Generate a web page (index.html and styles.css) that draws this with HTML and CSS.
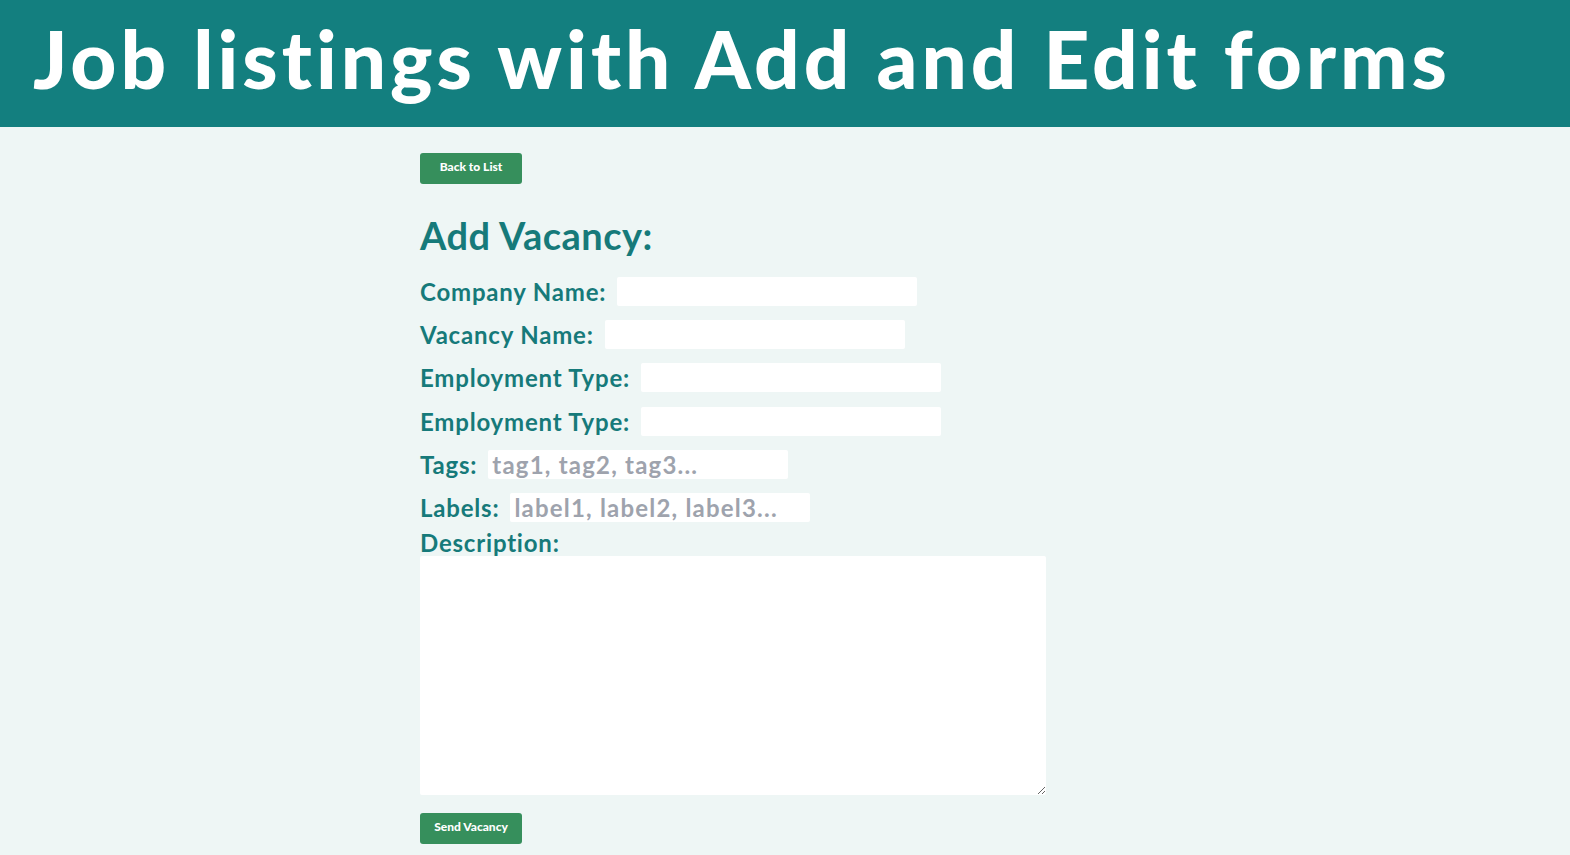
FILE: index.html
```html
<!DOCTYPE html>
<html lang="en">
<head>
<meta charset="utf-8">
<title>Job listings</title>
<link rel="stylesheet" href="styles.css">
</head>
<body>
<header class="site-header">
  <h1 class="site-title">Job listings with Add and Edit forms</h1>
</header>
<main class="container">
  <button class="btn btn-back" type="button">Back to List</button>
  <h2 class="form-title">Add Vacancy:</h2>
  <form class="vacancy-form">
    <div class="row"><label class="label">Company Name:</label><input class="field" type="text"></div>
    <div class="row"><label class="label">Vacancy Name:</label><input class="field" type="text"></div>
    <div class="row"><label class="label">Employment Type:</label><input class="field" type="text"></div>
    <div class="row"><label class="label">Employment Type:</label><input class="field" type="text"></div>
    <div class="row"><label class="label">Tags:</label><input class="field" type="text" placeholder="tag1, tag2, tag3..."></div>
    <div class="row"><label class="label">Labels:</label><input class="field" type="text" placeholder="label1, label2, label3..."></div>
    <label class="label desc-label">Description:</label>
    <textarea class="desc"></textarea>
    <button class="btn btn-send" type="button">Send Vacancy</button>
  </form>
</main>
</body>
</html>
```
FILE: styles.css
```css
* { box-sizing: border-box; }
html, body { margin: 0; padding: 0; }
body {
  background: #eef6f5;
  font-family: "Lato", "Open Sans", sans-serif;
  color: #167a7a;
}
.site-header {
  background: #137f7f;
  height: 127px;
  padding-left: 33px;
  display: flex;
  align-items: center;
}
.site-title {
  margin: 0;
  color: #fff;
  font-size: 80px;
  font-weight: 900;
  letter-spacing: 4px;
  line-height: 1;
  padding-bottom: 12px;
}
.container {
  width: 730px;
  margin: 0 auto;
  padding-top: 26px;
}
.btn {
  display: block;
  border: none;
  border-radius: 3px;
  background: #368f5c;
  color: #fff;
  font-family: inherit;
  font-weight: 900;
  font-size: 12px;
  height: 31px;
  width: 102px;
  padding: 0;
  padding-bottom: 4px;
}
.form-title {
  margin: 28px 0 0;
  font-size: 38px;
  letter-spacing: 0.5px;
  line-height: 46px;
  font-weight: 700;
}
.vacancy-form {
  display: flex;
  flex-direction: column;
  align-items: flex-start;
  margin-top: 12px;
}
.row {
  display: flex;
  align-items: center;
  gap: 11px;
  height: 43.2px;
}
.label {
  font-size: 24px;
  letter-spacing: 0.8px;
  font-weight: 700;
}
.field {
  width: 300px;
  height: 29px;
  border: none;
  border-radius: 2px;
  background: #fff;
  font-family: inherit;
  font-size: 24px;
  letter-spacing: 1.2px;
  font-weight: 700;
  padding: 0 4px;
  color: #333;
}
.field::placeholder { color: #9ea3ad; }
.desc-label { line-height: 26px; margin-top: 1px; }
.desc {
  width: 626px;
  height: 239px;
  border: none;
  border-radius: 2px;
  background: #fff;
  margin: 0;
}
.btn-send { margin-top: 18px; }
```
